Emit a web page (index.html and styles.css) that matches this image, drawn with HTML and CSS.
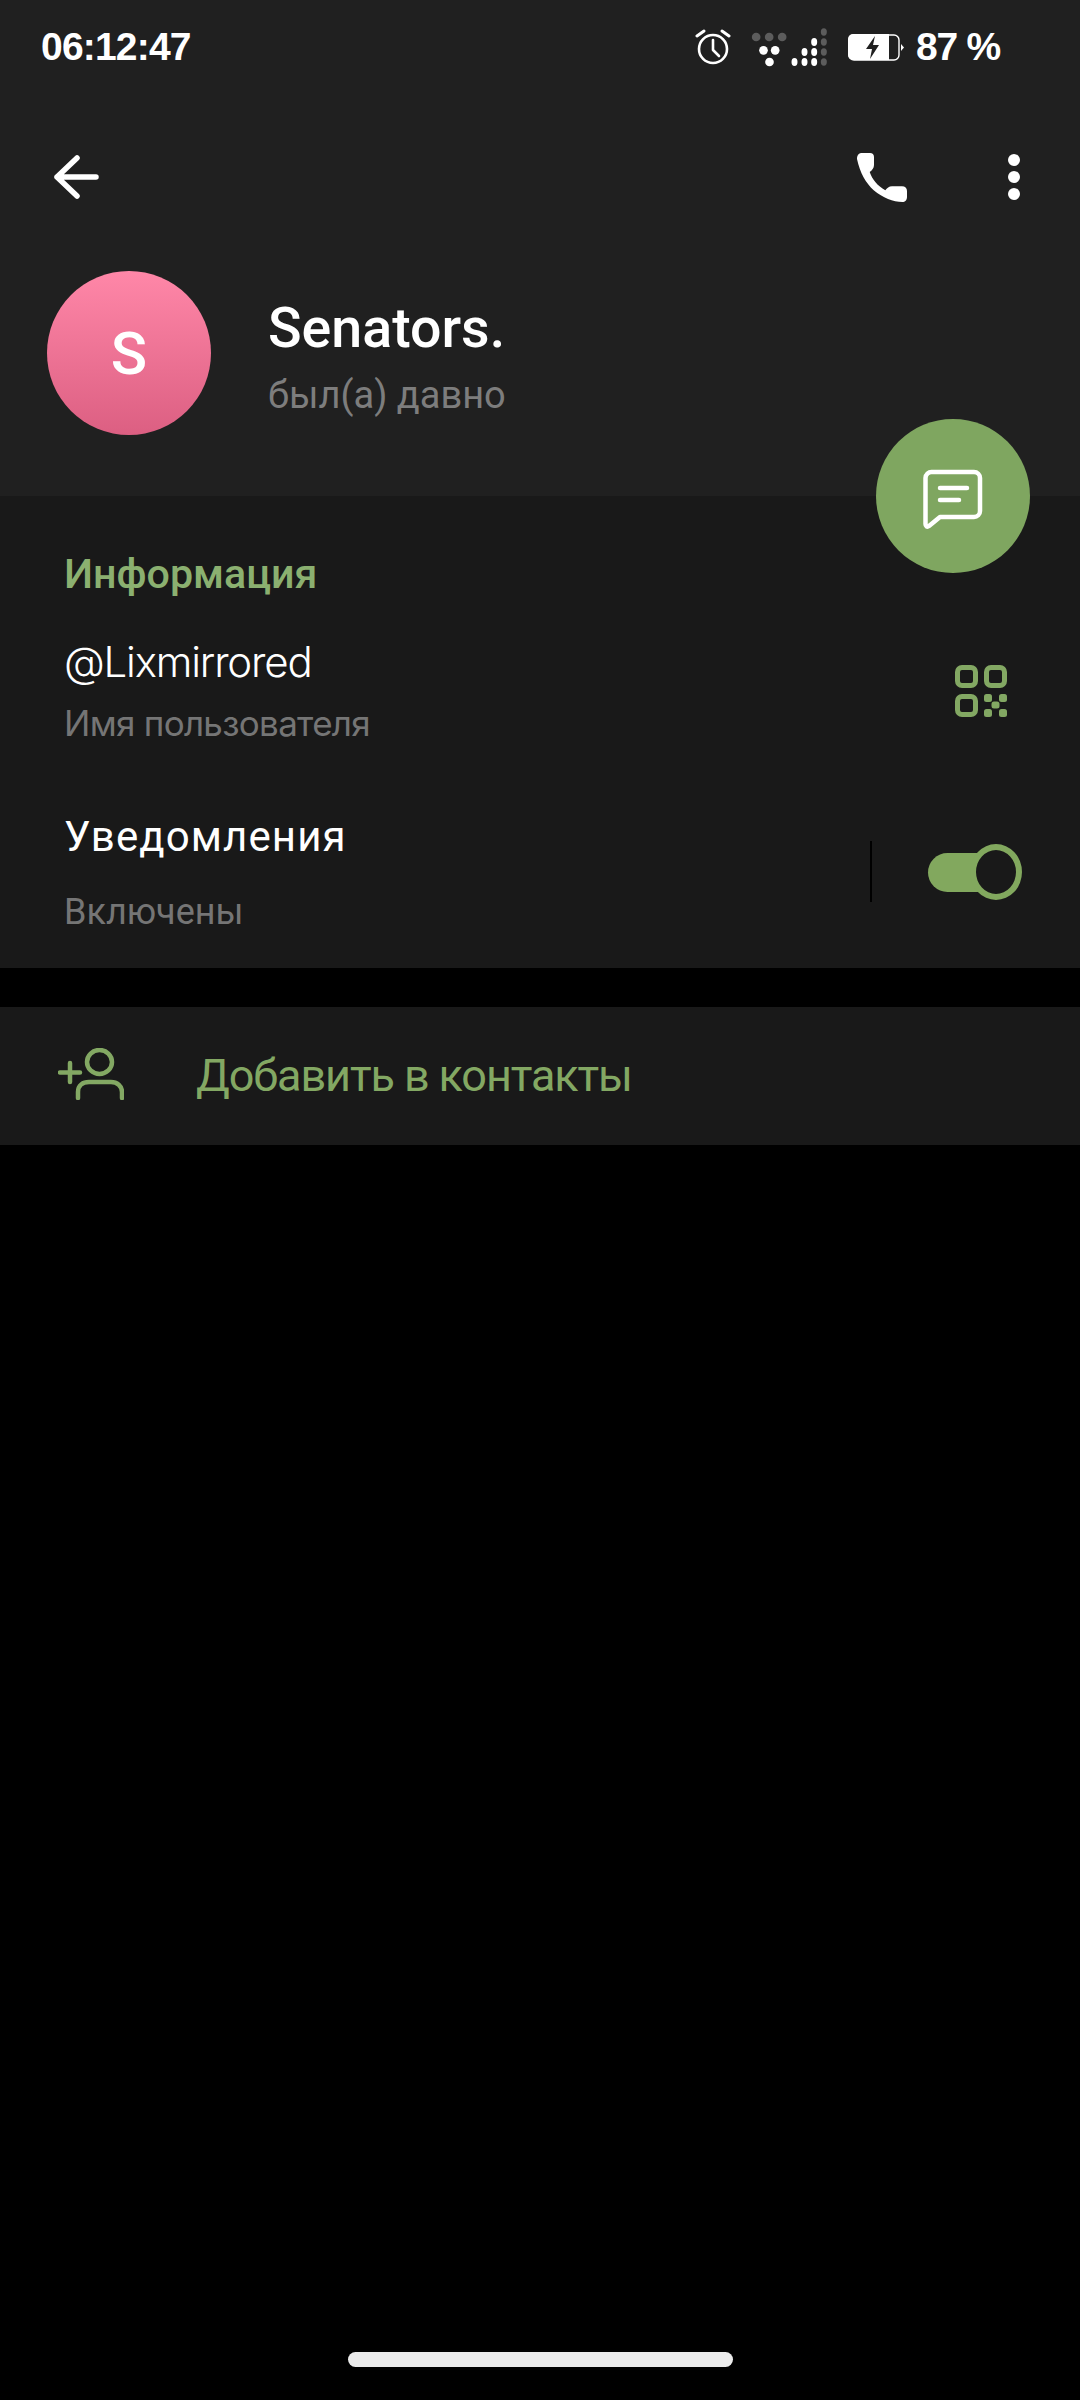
FILE: index.html
```html
<!DOCTYPE html>
<html lang="ru">
<head>
	<meta charset="UTF-8">
	<title>Senators.</title>
	<link rel="stylesheet" href="styles.css">
</head>
<body>
	<div class="screen">
		<header class="head">
			<div class="status">
				<span class="clock">06:12:47</span>
				<svg class="ic-alarm" width="36" height="36" viewBox="0 0 36 36" fill="none" stroke="#fff" stroke-linecap="round" stroke-linejoin="round">
					<circle cx="18" cy="20" r="14" stroke-width="2.6"/>
					<path d="M18 11v10l6 6" stroke-width="2.6"/>
					<path d="M2 7l7-5M34 7l-7-5" stroke-width="3"/>
				</svg>
				<svg class="ic-signal" width="77" height="40" viewBox="280 50 230 120">
					<g fill="#5c5c5c">
						<circle cx="295" cy="80" r="13"/>
						<circle cx="334" cy="80" r="13"/>
						<circle cx="373" cy="80" r="13"/>
						<ellipse cx="498" cy="65" rx="9" ry="11"/>
						<ellipse cx="498" cy="95" rx="9" ry="11"/>
						<ellipse cx="498" cy="125" rx="9" ry="11"/>
						<ellipse cx="498" cy="155" rx="9" ry="11"/>
					</g>
					<g fill="#fff">
						<circle cx="317" cy="120" r="13"/>
						<circle cx="352" cy="120" r="13"/>
						<circle cx="335" cy="155" r="13"/>
						<ellipse cx="410" cy="155" rx="9" ry="12"/>
						<ellipse cx="440" cy="125" rx="9" ry="12"/>
						<ellipse cx="440" cy="155" rx="9" ry="12"/>
						<ellipse cx="469" cy="95" rx="9" ry="12"/>
						<ellipse cx="469" cy="125" rx="9" ry="12"/>
						<ellipse cx="469" cy="155" rx="9" ry="12"/>
					</g>
				</svg>
				<svg class="ic-batt" width="56" height="28" viewBox="0 0 56 28">
					<rect x="1" y="2" width="50" height="25" rx="5" fill="none" stroke="#fff" stroke-width="1.4"/>
					<path d="M5 1h36v26H5a5 5 0 0 1-5-5V6a5 5 0 0 1 5-5z" fill="#fff"/>
					<path d="M53 11l3 3.500-3 3.500z" fill="#fff"/>
					<path d="M27 3l-9 13h6l-2 10 9-14h-6z" fill="#202020"/>
				</svg>
				<span class="pct">87 %</span>
			</div>
			<div class="toolbar">
				<svg class="ic-back" width="46" height="44" viewBox="0 0 46 44" fill="none" stroke="#fff" stroke-width="5.500" stroke-linecap="round" stroke-linejoin="round">
					<path d="M43 22H4M24 3L4 22l20 19"/>
				</svg>
				<svg class="ic-phone" width="50" height="49" viewBox="0 0 50 49">
					<path fill="#fff" d="M4 0H13C15.500 0 17 1.500 17 4V12C17 15 15 17.500 12.700 19C14 23 16 26 18.300 29C21 32.500 24.500 35 28.300 37.300C30 35 32 33.300 35 33.300H45C48 33.300 50 35 50 38V44C50 47 48 49 45.500 49C36 49 26 45 16.700 37.300C9 30 3 20 0 6C-.3 3 1.500 0 4 0Z"/>
				</svg>
				<div class="dots"><i></i><i></i><i></i></div>
			</div>
			<div class="profile">
				<div class="avatar">S</div>
				<div class="who">
					<div class="name">Senators.</div>
					<div class="seen">был(а) давно</div>
				</div>
			</div>
		</header>

		<button class="fab">
			<svg width="60" height="60" viewBox="0 0 60 60" fill="none" stroke="#fff" stroke-width="4.500" stroke-linecap="round" stroke-linejoin="round">
				<path d="M9 3h42a6 6 0 0 1 6 6v33a6 6 0 0 1-6 6H17L6 57c-2 1.500-3.500 0-3.500-2V9A6 6 0 0 1 9 3z"/>
				<path d="M17 19h27M17 31h19"/>
			</svg>
		</button>

		<section class="info">
			<h2 class="info-title">Информация</h2>
			<div class="row row-user">
				<div>
					<div class="val val-user">@Lixmirrored</div>
					<div class="sub sub-user">Имя пользователя</div>
				</div>
				<svg class="ic-qr" width="52" height="52" viewBox="0 0 52 52" fill="none" stroke="#83a863" stroke-width="5">
					<rect x="2.500" y="2.500" width="18" height="18" rx="4.500"/>
					<rect x="31.500" y="2.500" width="18" height="18" rx="4.500"/>
					<rect x="2.500" y="31.500" width="18" height="18" rx="4.500"/>
					<g fill="#83a863" stroke="none">
						<rect x="29" y="29" width="8" height="8" rx="2.500"/>
						<rect x="44" y="29" width="8" height="8" rx="2.500"/>
						<rect x="36.500" y="36.500" width="8" height="7" rx="2.500"/>
						<rect x="29" y="44" width="8" height="8" rx="2.500"/>
						<rect x="44" y="44" width="8" height="8" rx="2.500"/>
					</g>
				</svg>
			</div>
			<div class="row row-notif">
				<div>
					<div class="val val-notif">Уведомления</div>
					<div class="sub sub-notif">Включены</div>
				</div>
				<div class="notif-right">
					<div class="vline"></div>
					<div class="switch"><div class="knob"></div></div>
				</div>
			</div>
		</section>

		<section class="add">
			<svg class="ic-add" width="66" height="52" viewBox="0 0 66 52" fill="none" stroke="#83a863" stroke-width="4.500" stroke-linecap="round">
				<ellipse cx="41.500" cy="14" rx="12.500" ry="12"/>
				<path d="M2 24.500h20M12 15v19"/>
				<path d="M20 50v-6c0-7 5-10 11-10h22c6 0 11 4 11 10v6"/>
			</svg>
			<span class="add-text">Добавить в контакты</span>
		</section>

		<div class="grow"></div>
		<div class="homebar"></div>
	</div>
</body>
</html>
```

FILE: styles.css
```css
*{
	box-sizing:border-box;
}
html,body{
	margin:0;
	padding:0;
	background:#000;
}
.screen{
	position:relative;
	display:flex;
	flex-direction:column;
	width:1080px;
	height:2400px;
	overflow:hidden;
	font-family:Roboto,"Noto Sans",sans-serif;
	color:#fff;
}
svg{
	display:block;
	flex:none;
}

/* top part */
.head{
	height:496px;
	background:#202020;
}
.status{
	display:flex;
	align-items:center;
	height:94px;
	padding:0 80px 0 41px;
	font-family:"Liberation Sans",sans-serif;
	font-weight:700;
	font-size:39px;
	letter-spacing:-.8px;
}
.clock{
	margin-right:auto;
}
.ic-alarm{
	margin-right:20px;
}
.ic-signal{
	margin-right:20px;
}
.ic-batt{
	margin-right:12px;
}
.pct{
	letter-spacing:-1.2px;
}
.toolbar{
	display:flex;
	align-items:center;
	height:100px;
	margin-top:33px;
	padding:0 60px 0 53px;
}
.ic-back{
	margin-right:auto;
}
.ic-phone{
	margin-right:101px;
}
.dots{
	display:flex;
	flex-direction:column;
	gap:5px;
}
.dots i{
	display:block;
	width:12px;
	height:12px;
	border-radius:50%;
	background:#fff;
}
.profile{
	display:flex;
	align-items:flex-start;
	padding:44px 0 0 47px;
}
.avatar{
	display:flex;
	align-items:center;
	justify-content:center;
	width:164px;
	height:164px;
	border-radius:50%;
	background:linear-gradient(#ff87a8,#dc5f82);
	font-size:60px;
	font-weight:500;
}
.who{
	margin:26px 0 0 57px;
}
.name{
	font-size:55.500px;
	line-height:64px;
	font-weight:500;
}
.seen{
	margin-top:11px;
	font-size:38px;
	line-height:46px;
	color:#7d7d7d;
}

.fab{
	position:absolute;
	left:876px;
	top:419px;
	display:flex;
	align-items:center;
	justify-content:center;
	width:154px;
	height:154px;
	padding:6px 0 0;
	border:0;
	border-radius:50%;
	background:#7fa660;
}

/* info block */
.info{
	padding:56px 58px 34px 64px;
	background:#191919;
}
.info-title{
	margin:0;
	font-size:41.200px;
	line-height:44px;
	font-weight:500;
	color:#8bb070;
}
.row{
	display:flex;
	align-items:center;
	justify-content:space-between;
}
.row-user{
	margin-top:41px;
}
.row-notif{
	margin-top:67px;
}
.val{
	line-height:50px;
}
.val-user{
	font-family:Inter,sans-serif;
	font-size:42px;
	font-weight:300;
	letter-spacing:-1.200px;
}
.val-notif{
	font-size:42px;
	letter-spacing:1.100px;
}
.sub{
	line-height:44px;
	color:#757575;
}
.sub-user{
	margin-top:14px;
	font-family:Inter,sans-serif;
	font-size:35px;
	letter-spacing:-.7px;
}
.sub-notif{
	margin-top:28px;
	font-size:36px;
}
.ic-qr{
	margin-right:15px;
}
.notif-right{
	display:flex;
	align-items:center;
	margin-bottom:3px;
}
.vline{
	width:2px;
	height:61px;
	background:#000;
	margin-right:56px;
}
.switch{
	position:relative;
	width:94px;
	height:56px;
}
.switch::before{
	content:"";
	display:block;
	width:70px;
	height:39px;
	margin-top:9px;
	border-radius:20px;
	background:#82a85e;
}
.knob{
	position:absolute;
	right:0;
	top:0;
	width:52px;
	height:56px;
	border:6px solid #82a85e;
	border-radius:50%;
	background:#191919;
}

/* add to contacts */
.add{
	display:flex;
	align-items:center;
	height:138px;
	margin-top:39px;
	padding-left:58px;
	background:#191919;
}
.ic-add{
	margin-bottom:5px;
}
.add-text{
	margin-left:72px;
	margin-bottom:2px;
	font-size:45px;
	letter-spacing:-1.100px;
	color:#83a863;
}

.grow{
	flex:1;
}
.homebar{
	width:385px;
	height:15px;
	margin:0 auto 33px;
	border-radius:8px;
	background:#ebebeb;
}
```
